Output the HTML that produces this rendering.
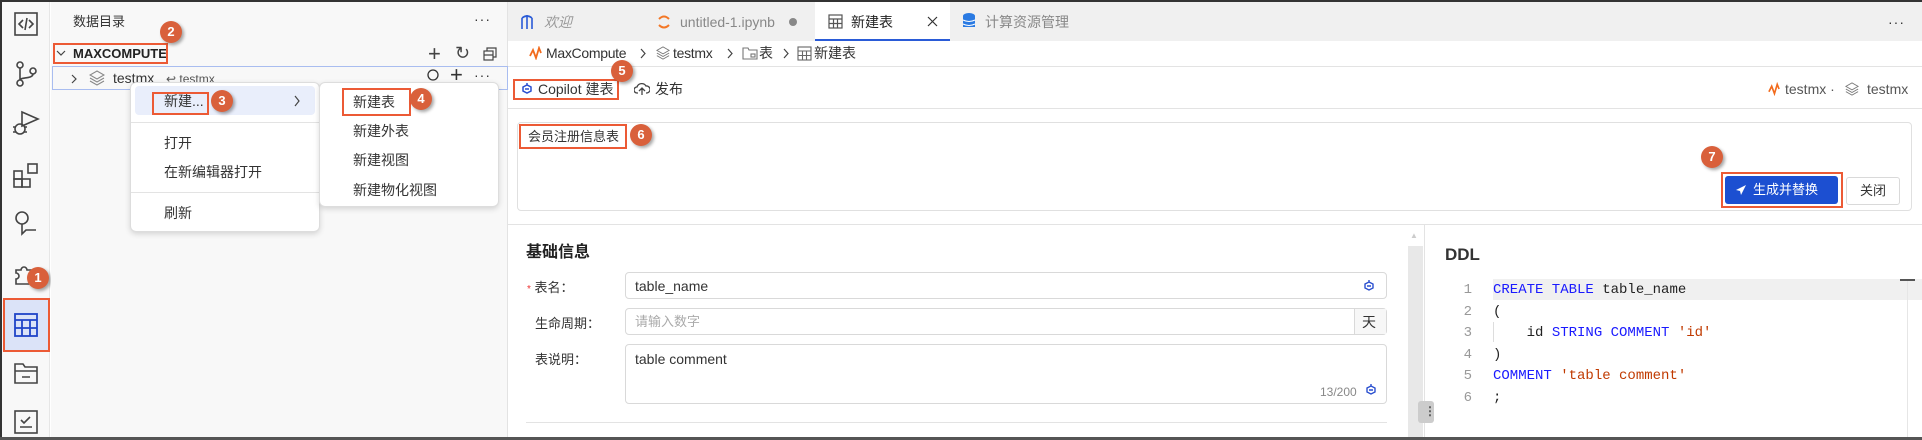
<!DOCTYPE html>
<html><head><meta charset="utf-8"><style>
*{margin:0;padding:0;box-sizing:border-box}
body{width:1922px;height:440px;overflow:hidden;background:#fff;font-family:"Liberation Sans","Noto Sans CJK SC",sans-serif;font-size:13px;color:#333;position:relative}
.a{position:absolute}
.t{position:absolute;white-space:nowrap;line-height:1}
.badge{position:absolute;width:22px;height:22px;border-radius:50%;background:#d9603b;color:#fff;font-weight:bold;font-size:13px;text-align:center;line-height:22px;box-shadow:2px 2px 3px rgba(0,0,0,.35)}
.red{position:absolute;border:2px solid #ec5a35}
.inp{position:absolute;border:1px solid #d9d9d9;border-radius:4px;background:#fff}
.mono{font-family:"Liberation Mono","DejaVu Sans Mono",monospace;font-size:14px}
svg{position:absolute}
</style></head><body>
<div class="a" style="left:0;top:0;width:1922px;height:2px;background:#333"></div>
<div class="a" style="left:0;top:0;width:2px;height:440px;background:#333"></div>
<div class="a" style="left:0;top:437px;width:1922px;height:3px;background:#555"></div>

<div class="a" style="left:2px;top:2px;width:48px;height:435px;background:#f8f8f8;border-right:1px solid #e6e6e6"></div>
<svg style="left:14px;top:12px" width="24" height="24" viewBox="0 0 24 24" fill="none" stroke="#444" stroke-width="1.6"><rect x="1" y="1" width="22" height="22"/><path d="M9 8l-4 4 4 4M15 8l4 4-4 4M13 6l-2 12"/></svg>
<svg style="left:14px;top:61px" width="24" height="26" viewBox="0 0 24 26" fill="none" stroke="#444" stroke-width="1.6"><circle cx="6" cy="4" r="3"/><circle cx="6" cy="22" r="3"/><circle cx="19" cy="10" r="3"/><path d="M6 7v12M19 13c0 5-13 3-13 6"/></svg>
<svg style="left:12px;top:110px" width="28" height="26" viewBox="0 0 28 26" fill="none" stroke="#444" stroke-width="1.6"><path d="M10 2v14l16-7z"/><circle cx="8" cy="19" r="5"/><path d="M1 17h3M1 22h3M12 17h3M12 22h3"/></svg>
<svg style="left:12px;top:162px" width="28" height="28" viewBox="0 0 28 28" fill="none" stroke="#444" stroke-width="1.6"><rect x="2" y="9" width="8" height="8"/><rect x="2" y="17" width="8" height="8"/><rect x="10" y="17" width="8" height="8"/><rect x="16" y="2" width="9" height="9"/></svg>
<svg style="left:13px;top:210px" width="26" height="28" viewBox="0 0 26 28" fill="none" stroke="#444" stroke-width="1.6"><circle cx="9" cy="8" r="6"/><path d="M9 14v10l4-4h10"/></svg>
<svg style="left:13px;top:262px" width="24" height="24" viewBox="0 0 24 24" fill="none" stroke="#444" stroke-width="1.6"><path d="M3 8h5a3 3 0 016 0h5v14H3v-5a3 3 0 000-6z"/></svg>
<div class="badge" style="left:27px;top:267px">1</div>
<div class="a" style="left:3px;top:299px;width:47px;height:53px;background:#dbe3f8"></div>
<div class="red" style="left:3px;top:298px;width:47px;height:54px"></div>
<svg style="left:14px;top:313px" width="24" height="24" viewBox="0 0 24 24" fill="none" stroke="#2044c8" stroke-width="1.8"><rect x="1" y="1" width="22" height="22"/><path d="M1 7h22M1 15h22M8 7v16M16 7v16"/></svg>
<svg style="left:14px;top:362px" width="24" height="22" viewBox="0 0 24 22" fill="none" stroke="#444" stroke-width="1.6"><path d="M1 2h8l2 3h12v16H1zM1 9h22M8 15h8"/></svg>
<svg style="left:14px;top:410px" width="24" height="24" viewBox="0 0 24 24" fill="none" stroke="#444" stroke-width="1.6"><rect x="1" y="1" width="22" height="22"/><path d="M7 10l3 3 6-6M6 17h12"/></svg>

<div class="a" style="left:51px;top:2px;width:457px;height:435px;background:#f8f8f8;border-right:1px solid #e3e3e3"></div>
<div class="t" style="left:73px;top:15px;font-size:13px">数据目录</div>
<div class="t" style="left:474px;top:12px;font-size:14px;letter-spacing:1px">···</div>
<svg style="left:56px;top:49px" width="10" height="8" viewBox="0 0 10 8" fill="none" stroke="#444" stroke-width="1.2"><path d="M1 2l4 4 4-4"/></svg>
<div class="t" style="left:73px;top:47px;font-weight:bold;font-size:13px;color:#222">MAXCOMPUTE</div>
<div class="red" style="left:53px;top:43px;width:115px;height:21px"></div>
<div class="badge" style="left:160px;top:21px">2</div>
<div class="t" style="left:428px;top:43px;font-size:22px;color:#444;font-weight:300">+</div>
<div class="t" style="left:455px;top:44px;font-size:18px;color:#444">↻</div>
<svg style="left:483px;top:47px" width="14" height="14" viewBox="0 0 14 14" fill="none" stroke="#444" stroke-width="1.2"><rect x="1" y="4" width="9" height="9"/><path d="M4 4V1h9v9h-3M1 8h9"/></svg>
<div class="a" style="left:52px;top:66px;width:456px;height:24px;border:1px solid #a9bdf0"></div>
<svg style="left:70px;top:74px" width="8" height="10" viewBox="0 0 8 10" fill="none" stroke="#444" stroke-width="1.2"><path d="M2 1l4 4-4 4"/></svg>
<svg style="left:89px;top:70px" width="16" height="16" viewBox="0 0 16 16" fill="none" stroke="#888" stroke-width="1.1"><path d="M8 1l7 4-7 4-7-4zM1 8l7 4 7-4M1 11l7 4 7-4"/></svg>
<div class="t" style="left:113px;top:71px;font-size:14px">testmx</div>
<div class="t" style="left:166px;top:73px;font-size:12px;color:#555">↩ testmx</div>
<svg style="left:426px;top:68px" width="16" height="16" viewBox="0 0 16 16" fill="none" stroke="#333" stroke-width="1.3"><circle cx="7" cy="7" r="5"/></svg>
<div class="t" style="left:450px;top:64px;font-size:22px;color:#333;font-weight:300">+</div>
<div class="t" style="left:474px;top:68px;font-size:14px;letter-spacing:1px">···</div>

<div class="a" style="left:130px;top:82px;width:190px;height:150px;background:#fff;border:1px solid #ddd;border-radius:6px;box-shadow:0 2px 6px rgba(0,0,0,.15)"></div>
<div class="a" style="left:135px;top:86px;width:180px;height:29px;background:#e9eefb;border-radius:4px"></div>
<div class="t" style="left:164px;top:94px;font-size:14px">新建...</div>
<div class="red" style="left:152px;top:92px;width:57px;height:23px"></div>
<div class="badge" style="left:211px;top:90px">3</div>
<svg style="left:293px;top:95px" width="8" height="12" viewBox="0 0 8 12" fill="none" stroke="#444" stroke-width="1.2"><path d="M2 1l4 5-4 5"/></svg>
<div class="a" style="left:131px;top:122px;width:188px;height:1px;background:#e3e3e3"></div>
<div class="t" style="left:164px;top:136px;font-size:14px">打开</div>
<div class="t" style="left:164px;top:165px;font-size:14px">在新编辑器打开</div>
<div class="a" style="left:131px;top:192px;width:188px;height:1px;background:#e3e3e3"></div>
<div class="t" style="left:164px;top:206px;font-size:14px">刷新</div>

<div class="a" style="left:319px;top:82px;width:180px;height:125px;background:#fff;border:1px solid #ddd;border-radius:6px;box-shadow:0 2px 6px rgba(0,0,0,.15)"></div>
<div class="t" style="left:353px;top:95px;font-size:14px">新建表</div>
<div class="red" style="left:342px;top:88px;width:69px;height:28px"></div>
<div class="badge" style="left:410px;top:88px">4</div>
<div class="t" style="left:353px;top:124px;font-size:14px">新建外表</div>
<div class="t" style="left:353px;top:153px;font-size:14px">新建视图</div>
<div class="t" style="left:353px;top:183px;font-size:14px">新建物化视图</div>

<div class="a" style="left:508px;top:2px;width:1414px;height:39px;background:#f0f0f0"></div>
<svg style="left:520px;top:14px" width="14" height="16" viewBox="0 0 14 16" fill="none" stroke="#2a5bd7" stroke-width="1.6"><path d="M2 15V4M7 15V1M12 15V4M2 4q5-4 10 0"/></svg>
<div class="t" style="left:544px;top:15px;font-size:14px;color:#999;font-style:italic">欢迎</div>
<svg style="left:657px;top:14px" width="14" height="16" viewBox="0 0 14 16" fill="none" stroke="#f37726" stroke-width="2"><path d="M2 5q5-5 10 0M2 11q5 5 10 0"/></svg>
<div class="t" style="left:680px;top:15px;font-size:14px;color:#888">untitled-1.ipynb</div>
<div class="a" style="left:789px;top:18px;width:8px;height:8px;border-radius:50%;background:#888"></div>
<div class="a" style="left:815px;top:2px;width:135px;height:39px;background:#fff;border-bottom:2px solid #2a5bd7"></div>
<svg style="left:828px;top:14px" width="15" height="15" viewBox="0 0 15 15" fill="none" stroke="#555" stroke-width="1.2"><rect x="1" y="1" width="13" height="13"/><path d="M1 5h13M1 9.5h13M5.5 5v9M9.5 5v9"/></svg>
<div class="t" style="left:851px;top:15px;font-size:14px;color:#222">新建表</div>
<svg style="left:927px;top:16px" width="11" height="11" viewBox="0 0 11 11" stroke="#333" stroke-width="1.2"><path d="M1 1l9 9M10 1l-9 9"/></svg>
<svg style="left:962px;top:12px" width="14" height="18" viewBox="0 0 14 18"><ellipse cx="7" cy="4" rx="6" ry="3" fill="#2a7ae2"/><rect x="1" y="4" width="12" height="11" fill="#2a7ae2"/><path d="M1 8q6 3 12 0M1 12q6 3 12 0" stroke="#fff" fill="none"/></svg>
<div class="t" style="left:985px;top:15px;font-size:14px;color:#888">计算资源管理</div>
<div class="t" style="left:1888px;top:15px;font-size:14px;letter-spacing:1px">···</div>

<svg style="left:529px;top:46px" width="13" height="14" viewBox="0 0 13 14" fill="none" stroke="#f26b1d" stroke-width="1.8"><path d="M1 10l3-6 3 8 3-10 2 5"/></svg>
<div class="t" style="left:546px;top:46px;font-size:14px;letter-spacing:-0.3px">MaxCompute</div>
<svg style="left:640px;top:48px" width="7" height="11" viewBox="0 0 7 11" fill="none" stroke="#444" stroke-width="1.2"><path d="M1 1l4 4.5-4 4.5"/></svg>
<svg style="left:656px;top:45px" width="14" height="16" viewBox="0 0 16 16" fill="none" stroke="#777" stroke-width="1.1"><path d="M8 1l7 4-7 4-7-4zM1 8l7 4 7-4M1 11l7 4 7-4"/></svg>
<div class="t" style="left:673px;top:46px;font-size:14px;letter-spacing:-0.3px">testmx</div>
<svg style="left:727px;top:48px" width="7" height="11" viewBox="0 0 7 11" fill="none" stroke="#444" stroke-width="1.2"><path d="M1 1l4 4.5-4 4.5"/></svg>
<svg style="left:742px;top:47px" width="16" height="13" viewBox="0 0 16 13" fill="none" stroke="#777" stroke-width="1.1"><path d="M1 1h5l1 2h8v9H1z"/><rect x="9" y="7" width="4" height="3"/></svg>
<div class="t" style="left:759px;top:46px;font-size:14px">表</div>
<svg style="left:783px;top:48px" width="7" height="11" viewBox="0 0 7 11" fill="none" stroke="#444" stroke-width="1.2"><path d="M1 1l4 4.5-4 4.5"/></svg>
<svg style="left:797px;top:46px" width="15" height="15" viewBox="0 0 15 15" fill="none" stroke="#666" stroke-width="1.1"><rect x="1" y="1" width="13" height="13"/><path d="M1 5h13M1 9.5h13M5.5 5v9M9.5 5v9"/></svg>
<div class="t" style="left:814px;top:46px;font-size:14px">新建表</div>
<div class="a" style="left:508px;top:66px;width:1414px;height:1px;background:#e3e3e3"></div>

<svg style="left:520px;top:82px" width="14" height="14" viewBox="0 0 14 14" fill="none" stroke="#2a4fcf" stroke-width="1.5"><path d="M7 1v2M3 5l4-2 4 2v4l-4 2-4-2zM5 7l4 0"/></svg>
<div class="t" style="left:538px;top:82px;font-size:14px">Copilot 建表</div>
<div class="red" style="left:513px;top:79px;width:106px;height:21px"></div>
<div class="badge" style="left:611px;top:60px">5</div>
<svg style="left:634px;top:82px" width="16" height="14" viewBox="0 0 16 14" fill="none" stroke="#444" stroke-width="1.3"><path d="M4 11H3a3 3 0 010-6 5 5 0 019-1 3.5 3.5 0 011 7h-1M8 13V6M5 9l3-3 3 3"/></svg>
<div class="t" style="left:655px;top:82px;font-size:14px">发布</div>
<svg style="left:1768px;top:82px" width="12" height="14" viewBox="0 0 13 14" fill="none" stroke="#f26b1d" stroke-width="1.8"><path d="M1 10l3-6 3 8 3-10 2 5"/></svg>
<div class="t" style="left:1785px;top:82px;font-size:14px;color:#555">testmx ·</div>
<svg style="left:1845px;top:81px" width="14" height="16" viewBox="0 0 16 16" fill="none" stroke="#777" stroke-width="1.1"><path d="M8 1l7 4-7 4-7-4zM1 8l7 4 7-4M1 11l7 4 7-4"/></svg>
<div class="t" style="left:1867px;top:82px;font-size:14px;color:#555">testmx</div>
<div class="a" style="left:508px;top:108px;width:1414px;height:1px;background:#e3e3e3"></div>

<div class="a" style="left:517px;top:122px;width:1395px;height:89px;border:1px solid #e0e0e0;border-radius:4px;background:#fff"></div>
<div class="t" style="left:528px;top:130px;font-size:13px">会员注册信息表</div>
<div class="red" style="left:519px;top:124px;width:108px;height:25px"></div>
<div class="badge" style="left:630px;top:124px">6</div>
<div class="badge" style="left:1701px;top:146px">7</div>
<div class="red" style="left:1721px;top:172px;width:122px;height:36px"></div>
<div class="a" style="left:1725px;top:176px;width:113px;height:28px;background:#1c4fd1;border-radius:3px"></div>
<svg style="left:1735px;top:184px" width="12" height="12" viewBox="0 0 12 12"><path d="M11 1L1 6l4 1 1 4z" fill="#fff"/></svg>
<div class="t" style="left:1753px;top:183px;font-size:13px;color:#fff">生成并替换</div>
<div class="a" style="left:1846px;top:177px;width:54px;height:28px;border:1px solid #d9d9d9;border-radius:3px;background:#fff"></div>
<div class="t" style="left:1860px;top:184px;font-size:13px">关闭</div>
<div class="a" style="left:508px;top:224px;width:1414px;height:1px;background:#e3e3e3"></div>

<div class="t" style="left:526px;top:245px;font-size:16px;font-weight:bold;color:#222">基础信息</div>
<div class="t" style="left:527px;top:281px;font-size:13px"><span style="color:#e33;font-size:10px">*</span> 表名：</div>
<div class="inp" style="left:625px;top:272px;width:762px;height:27px"></div>
<div class="t" style="left:635px;top:279px;font-size:14px">table_name</div>
<svg style="left:1362px;top:279px" width="14" height="14" viewBox="0 0 14 14" fill="none" stroke="#2a4fcf" stroke-width="1.4"><path d="M7 1v2M3 5l4-2 4 2v4l-4 2-4-2zM5 7h4"/></svg>
<div class="t" style="left:535px;top:317px;font-size:13px">生命周期：</div>
<div class="inp" style="left:625px;top:308px;width:762px;height:27px"></div>
<div class="t" style="left:635px;top:315px;font-size:13px;color:#aaa">请输入数字</div>
<div class="a" style="left:1354px;top:309px;width:32px;height:25px;background:#f7f7f7;border-left:1px solid #d9d9d9"></div>
<div class="t" style="left:1362px;top:315px;font-size:14px">天</div>
<div class="t" style="left:535px;top:353px;font-size:13px">表说明：</div>
<div class="inp" style="left:625px;top:344px;width:762px;height:60px"></div>
<div class="t" style="left:635px;top:352px;font-size:14px">table comment</div>
<div class="t" style="left:1320px;top:386px;font-size:12px;color:#888">13/200</div>
<svg style="left:1364px;top:383px" width="14" height="14" viewBox="0 0 14 14" fill="none" stroke="#2a4fcf" stroke-width="1.4"><path d="M7 1v2M3 5l4-2 4 2v4l-4 2-4-2zM5 7h4"/></svg>
<div class="a" style="left:526px;top:422px;width:861px;height:1px;background:#e3e3e3"></div>

<div class="a" style="left:1408px;top:246px;width:15px;height:191px;background:#e8e8e8"></div>
<div class="t" style="left:1410px;top:232px;font-size:8px;color:#ccc">▲</div>
<div class="a" style="left:1424px;top:225px;width:1px;height:212px;background:#e3e3e3"></div>
<div class="a" style="left:1418px;top:401px;width:16px;height:22px;background:#ccc;border-radius:3px"></div>
<div class="t" style="left:1424px;top:405px;font-size:12px;color:#555;font-weight:bold">⋮</div>

<div class="t" style="left:1445px;top:246px;font-size:17px;font-weight:bold;color:#333">DDL</div>
<div class="a" style="left:1493px;top:279px;width:429px;height:21px;background:#f0f0f0"></div>
<div class="a" style="left:1900px;top:279px;width:15px;height:2px;background:#555"></div>
<div class="a" style="left:1907px;top:281px;width:1px;height:156px;background:#e6e6e6"></div>
<div class="a" style="left:1493px;top:322px;width:1px;height:20px;background:#ddd"></div>
<div class="mono" style="position:absolute;left:1458px;top:280px;line-height:21.5px;color:#999;text-align:right;width:14px">1<br>2<br>3<br>4<br>5<br>6</div>
<div class="mono" style="position:absolute;left:1493px;top:280px;line-height:21.5px;color:#222;white-space:pre"><span style="color:#1a1aff">CREATE TABLE</span> table_name
(
    id <span style="color:#1a1aff">STRING COMMENT</span> <span style="color:#c03a00">'id'</span>
)
<span style="color:#1a1aff">COMMENT</span> <span style="color:#c03a00">'table comment'</span>
;</div>
</body></html>
